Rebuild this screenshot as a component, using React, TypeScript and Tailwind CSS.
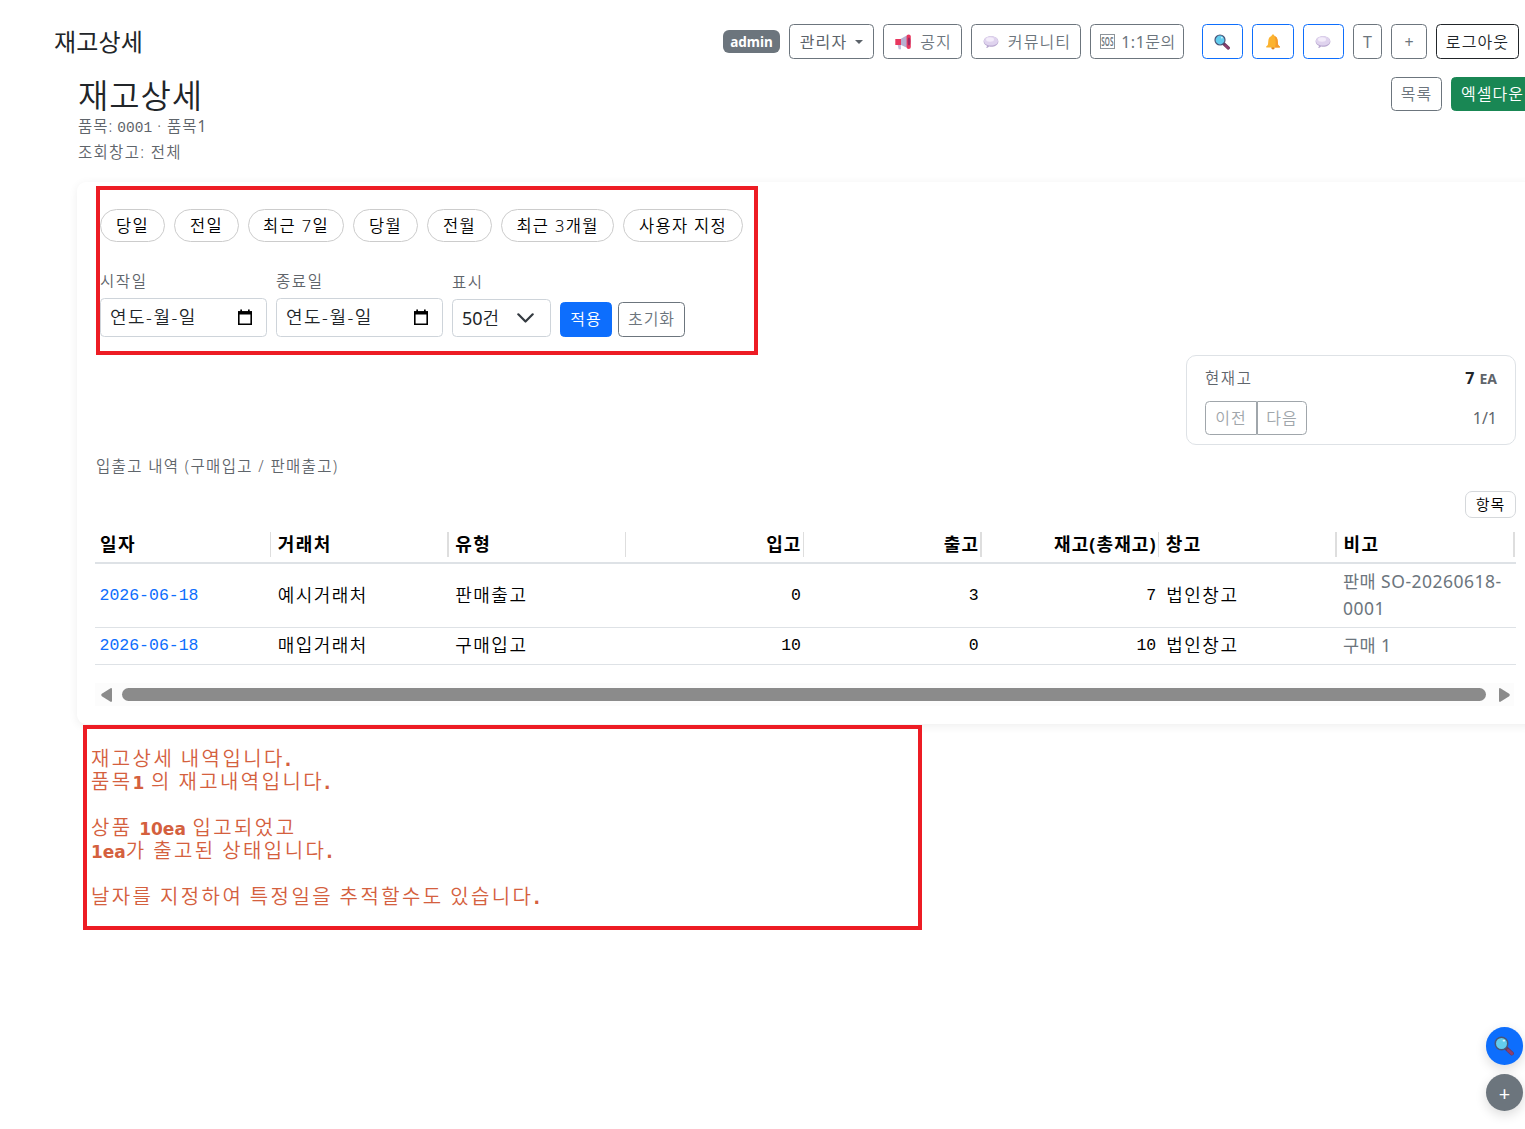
import type { ReactNode } from 'react'
import clsx from 'clsx'

const PRESETS = [
  { label: '당일', width: 'w-[65px]' },
  { label: '전일', width: 'w-[65px]' },
  { label: '최근 7일', width: 'w-[96px]' },
  { label: '당월', width: 'w-[65px]' },
  { label: '전월', width: 'w-[65px]' },
  { label: '최근 3개월', width: 'w-[113px]' },
  { label: '사용자 지정', width: 'w-[120px]' },
]

const COLUMNS = [
  { label: '일자', bar: 'w-px' },
  { label: '거래처', bar: 'w-[2px]' },
  { label: '유형', bar: 'w-px' },
  { label: '입고', bar: 'w-px', right: true },
  { label: '출고', bar: 'w-[2px]', right: true },
  { label: '재고(총재고)', bar: 'w-px', right: true },
  { label: '창고', bar: 'w-[2px]' },
  { label: '비고', bar: 'w-[2px]' },
]

const ROWS = [
  { date: '2026-06-18', partner: '예시거래처', type: '판매출고', inQty: 0, outQty: 3, stock: 7, warehouse: '법인창고', memo: ['판매 SO-20260618-', '0001'] },
  { date: '2026-06-18', partner: '매입거래처', type: '구매입고', inQty: 10, outQty: 0, stock: 10, warehouse: '법인창고', memo: ['구매 1'] },
]

function SearchIcon({ className }: { className?: string }) {
  return (
    <svg viewBox="0 0 16 16" className={className}>
      <path d="M10 10l4.3 4" stroke="#6b3a5e" strokeWidth="3.2" strokeLinecap="round" />
      <path d="M11.4 11.4l2.8 2.6" stroke="#8e3f6e" strokeWidth="2.2" strokeLinecap="round" />
      <circle cx="6" cy="6" r="5" fill="#63cdee" stroke="#4a5578" strokeWidth="1.2" />
      <ellipse cx="7.9" cy="3.7" rx="1" ry=".7" fill="#d9f5ff" />
    </svg>
  )
}

function BellIcon() {
  return (
    <svg viewBox="0 0 16 16" className="size-4">
      <circle cx="8" cy="13.8" r="1.7" fill="#d98324" />
      <path d="M8 .6c.9 0 1.4.6 1.4 1.4 2.3.7 3.1 2.6 3.3 5l.3 3.2c.2 1 .9 1.5 1.8 2.4.3.4.2 1-.4 1H1.6c-.6 0-.7-.6-.4-1 .9-.9 1.6-1.4 1.8-2.4l.3-3.2c.2-2.4 1-4.3 3.3-5C6.6 1.2 7.1.6 8 .6z" fill="#fcb32f" />
      <path d="M9.4 2c2.3.7 3.1 2.6 3.3 5l.3 3.2c.2 1 .9 1.5 1.8 2.4.3.4.2 1-.4 1H10c1-3 1-8-.6-11.6z" fill="#f59a2c" />
    </svg>
  )
}

function BubbleIcon() {
  return (
    <svg viewBox="0 0 16 16" className="size-4">
      <path d="M8 2.2c4.2 0 7.4 2.3 7.4 5.3S12.2 12.8 8 12.8c-.7 0-1.3 0-1.9-.2-.6.9-1.7 1.5-3 1.5.6-.6.9-1.4.8-2.3C1.9 10.9.6 9.3.6 7.5.6 4.5 3.8 2.2 8 2.2z" fill="#b9a8d0" />
      <path d="M8 2.2c4.1 0 7 2 7 4.7s-3 4.6-7 4.6-7-1.9-7-4.6 2.9-4.7 7-4.7z" fill="#dfd3ee" />
      <ellipse cx="7" cy="5.5" rx="4" ry="2.2" fill="#f3ecfa" />
    </svg>
  )
}

function MegaphoneIcon() {
  return (
    <svg viewBox="0 0 16 16" className="size-4">
      <path d="M2.6 10.5h3.2l.2 4.7H3.7z" fill="#c3b8d8" />
      <path d="M5.5 5L13 .8v13.5L5.5 10.7z" fill="#b7afd0" />
      <path d="M.3 5H6v6H.3z" fill="#e8375f" />
      <rect x="11.6" y=".4" width="4.2" height="14.6" rx="2.1" fill="#e8375f" />
      <ellipse cx="14" cy="7.6" rx="1.3" ry="4" fill="#9c2a63" />
    </svg>
  )
}

function SosIcon() {
  return (
    <span className="flex h-[15px] w-[15px] items-center justify-center border border-[#8d949a]">
      <span className="scale-x-[.58] scale-y-110 text-[11px] leading-none font-semibold tracking-normal text-[#6c757d]">SOS</span>
    </span>
  )
}

function CalendarIcon() {
  return (
    <svg viewBox="0 0 16 17" className="h-[17px] w-4" fill="none">
      <path d="M1.8 3h12.4v12.2H1.8z" stroke="#000" strokeWidth="1.6" />
      <path d="M1 2.2h14v3.3H1zM3.3.5H5v2H3.3zM11 .5h1.7v2H11z" fill="#000" />
    </svg>
  )
}

function Button({ height = 'h-[35px]', className, children }: { height?: string; className?: string; children: ReactNode }) {
  return (
    <button className={clsx('flex shrink-0 items-center justify-center rounded-[4.5px] border text-[16px] leading-none whitespace-nowrap', height, className)}>
      {children}
    </button>
  )
}

function DateField({ label }: { label: string }) {
  return (
    <div className="w-[167px]">
      <div className="h-[27px] text-[15.5px] leading-[20px] tracking-[1.6px] text-[#5f656b]">{label}</div>
      <div className="flex h-[39px] items-center justify-between rounded-[4.5px] border border-[#ced4da] pr-[13px] pl-[9px] text-[18px] tracking-[1.5px] text-[#212529]">
        <span>연도-월-일</span>
        <CalendarIcon />
      </div>
    </div>
  )
}

function Latin({ children }: { children: ReactNode }) {
  return <span className="font-['DejaVu_Sans'] text-[17px] leading-none font-bold tracking-normal">{children}</span>
}

function Header() {
  return (
    <header className="flex h-[59px] items-end justify-between pr-[6px] pl-[54px]">
      <div className="flex h-[35px] items-center text-[24px] leading-none font-normal tracking-[.2px] text-[#212529]">재고상세</div>
      <div className="flex items-center gap-[9px] tracking-[1.1px]">
        <span className="flex h-[23px] w-[57px] items-center justify-center rounded-[6px] bg-[#6c757d] pt-px text-[13.5px] font-bold tracking-normal text-white">admin</span>
        <Button className="w-[85px] gap-[8px] border-[#6c757d] font-normal text-[#5c636a]">
          관리자
          <span className="border-x-[4px] border-t-[4px] border-x-transparent border-t-[#5c636a]" />
        </Button>
        <Button className="w-[79px] gap-[9px] border-[#6c757d] pl-[2px] text-[#6c757d]"><MegaphoneIcon />공지</Button>
        <Button className="w-[110px] gap-[9px] border-[#6c757d] pl-[2px] text-[#6c757d]"><BubbleIcon />커뮤니티</Button>
        <Button className="mr-[9px] w-[94px] gap-[6px] border-[#6c757d] pl-[2px] tracking-[.5px] text-[#6c757d]"><SosIcon /><span><span className="font-normal">1:1</span>문의</span></Button>
        <Button className="w-[41px] border-[#0d6efd] pr-px"><SearchIcon className="size-4" /></Button>
        <Button className="w-[42px] border-[#0d6efd]"><BellIcon /></Button>
        <Button className="w-[41px] border-[#0d6efd] pr-px"><BubbleIcon /></Button>
        <Button className="w-[29px] border-[#6c757d] font-normal tracking-normal text-[#6c757d]">T</Button>
        <Button className="w-[36px] border-[#6c757d] pt-px font-normal tracking-normal text-[#6c757d]">+</Button>
        <Button className="w-[83px] border-[#212529] text-[#212529]">로그아웃</Button>
      </div>
    </header>
  )
}

function StockTable() {
  return (
    <table className="w-[1421px] table-fixed border-collapse text-[18px] text-black">
      <thead>
        <tr className="h-[37px] border-b-2 border-[#dee2e6]">
          {COLUMNS.map(c => (
            <th key={c.label} className={clsx('relative pt-px pb-0 font-bold whitespace-nowrap', c.right ? 'pr-[4px] text-right tracking-[1.1px]' : 'pl-[5px] text-left tracking-[1.5px]')}>
              {c.label}
              <span className={clsx('absolute top-[6px] right-[1.5px] h-[25px] bg-[#dedede]', c.bar)} />
            </th>
          ))}
        </tr>
      </thead>
      <tbody>
        {ROWS.map(r => (
          <tr key={r.partner} className={clsx('border-b border-[#dee2e6] tracking-[1.5px]', r.memo.length > 1 ? 'h-[64px]' : 'h-[37px]')}>
            <td className="px-[4.5px] pt-[2px] font-['Liberation_Mono'] text-[16.5px] tracking-normal text-[#0d6efd]">{r.date}</td>
            <td className="px-[5px]">{r.partner}</td>
            <td className="px-[5px]">{r.type}</td>
            {[r.inQty, r.outQty, r.stock].map((n, i) => (
              <td key={i} className="px-[4.5px] pt-[2px] text-right font-['Liberation_Mono'] text-[16.5px] tracking-normal">{n}</td>
            ))}
            <td className="px-[5.5px]">{r.warehouse}</td>
            <td className="pl-[4.5px] text-[17.5px] leading-[27.5px] font-normal tracking-[.5px] whitespace-nowrap text-[#6c757d]">
              {r.memo.map(m => <div key={m} className="h-[27.5px]">{m}</div>)}
            </td>
          </tr>
        ))}
      </tbody>
    </table>
  )
}

export default function App() {
  return (
    <div className="relative h-[1129px] w-[1525px] overflow-hidden bg-white font-['Noto_Sans','Noto_Sans_CJK_KR',sans-serif] font-[350]">
      <Header />

      <div className="mt-[18px] flex h-[105px] items-start justify-between pl-[78px]">
        <div>
          <h1 className="h-[36px] text-[33px] leading-[37px] font-[350] tracking-[.9px] text-[#212529]">재고상세</h1>
          <div className="text-[15.5px] leading-[26px] tracking-[1px] text-[#5f656b]">
            <div className="h-[26px]">품목: <span className="-ml-px font-['Liberation_Mono'] text-[14.5px] tracking-normal">0001</span> · 품목<span className="font-normal">1</span></div>
            <div className="h-[26px] tracking-[1.3px]">조회창고: 전체</div>
          </div>
        </div>
        <div className="-mr-[9px] flex gap-[9px] tracking-[1px]">
          <Button height="h-[34px]" className="w-[51px] border-[#6c757d] pb-px text-[#6c757d]">목록</Button>
          <Button height="h-[34px]" className="w-[83px] border-[#198754] bg-[#198754] pb-px text-white">엑셀다운</Button>
        </div>
      </div>

      <main className="ml-[77px] h-[542px] w-[1460px] rounded-[9px] bg-white pl-[18px] shadow-[0_2px_10px_rgba(0,0,0,.07)]">
        <div className="flex gap-[9px] pt-[27px] pl-[5px]">
          {PRESETS.map(p => (
            <button key={p.label} className={clsx('flex h-[33px] items-center justify-center rounded-full border border-[#ccc] pt-px text-[16.5px] tracking-[1.3px] whitespace-nowrap text-black', p.width)}>
              {p.label}
            </button>
          ))}
        </div>

        <div className="mt-[29px] flex h-[66px] items-end gap-[9px] pl-[5px]">
          <DateField label="시작일" />
          <DateField label="종료일" />
          <div className="w-[99px]">
            <div className="h-[27px] text-[15.5px] leading-[20px] tracking-[1.6px] text-[#5f656b]">표시</div>
            <div className="flex h-[38px] items-center justify-between rounded-[4.5px] border border-[#ced4da] pr-[16px] pl-[9px] text-[18px] text-[#212529]">
              <span><span className="font-normal">50</span>건</span>
              <svg viewBox="0 0 17 10" className="h-[10px] w-[17px]" fill="none" stroke="#343a40" strokeWidth="2.2" strokeLinecap="round" strokeLinejoin="round">
                <path d="M1.3 1.3l7.2 7.2 7.2-7.2" />
              </svg>
            </div>
          </div>
          <div className="flex gap-[6px] tracking-[1px]">
            <Button className="w-[52px] border-[#0d6efd] bg-[#0d6efd] pb-[2px] text-white">적용</Button>
            <Button className="w-[67px] border-[#6c757d] pb-[2px] text-[#6c757d]">초기화</Button>
          </div>
        </div>

        <section className="mt-[18px] ml-[1091px] h-[90px] w-[330px] rounded-[10px] border border-[#dee2e6] px-[18px] pt-[9px]">
          <div className="flex h-[27px] items-center justify-between text-[15.5px] tracking-[1.6px] text-[#5f656b]">
            <span>현재고</span>
            <span className="flex items-baseline gap-[5px] pb-[2px] tracking-normal">
              <b className="text-[16px] leading-none text-[#212529]">7</b>
              <b className="text-[14px] leading-none">EA</b>
            </span>
          </div>
          <div className="mt-[9px] flex h-[34px] items-center justify-between">
            <div className="flex tracking-[1px]">
              <Button height="h-[34px]" className="w-[52px] rounded-r-none border-[#a0a6ab] text-[#a0a6ab]">이전</Button>
              <Button height="h-[34px]" className="w-[50px] rounded-l-none border-[#a0a6ab] text-[#a0a6ab]">다음</Button>
            </div>
            <span className="text-[16px] font-normal text-[#5f656b]">1/1</span>
          </div>
        </section>

        <div className="mt-[8px] h-[26px] pl-px text-[15.5px] leading-[26px] tracking-[1.35px] text-[#5f656b]">입출고 내역 (구매입고 / 판매출고)</div>
        <div className="mt-[12px] flex h-[35px] w-[1421px] justify-end">
          <button className="flex h-[27px] w-[51px] items-center justify-center rounded-[7px] border border-[#d5d8db] text-[15px] tracking-[1px] text-black">항목</button>
        </div>

        <StockTable />

        <div className="mt-[18px] flex h-[23px] w-[1419px] items-center bg-[#fcfcfc] pl-[6px]">
          <svg viewBox="0 0 11 14" className="mt-px h-[14px] w-[11px] shrink-0" fill="#8b8b8b"><path d="M11 1.2v11.6q0 1.4-1.4 1L.8 8.2Q-.3 7 .8 5.8L9.6.2Q11-.2 11 1.2z" /></svg>
          <div className="ml-[10px] h-[13px] w-[1364px] rounded-full bg-[#8b8b8b]" />
          <svg viewBox="0 0 11 14" className="mt-px ml-[13px] h-[14px] w-[11px] shrink-0" fill="#8b8b8b"><path d="M0 1.2v11.6q0 1.4 1.4 1l8.800-5.6q1.1-1.2 0-2.4L1.4.2Q0-.2 0 1.2z" /></svg>
        </div>
      </main>

      {/* guide note under the card */}
      <div className="relative mt-px ml-[83px] h-[205px] w-[839px] border-4 border-[#ed1c24] bg-white pt-[18px] pl-[4px] text-[20px] leading-[23px] tracking-[2.4px] whitespace-nowrap text-[#d4603e] [word-spacing:-1px]">
        <div className="h-[23px]">재고상세 내역입니다<Latin>.</Latin></div>
        <div className="h-[23px]">품목<Latin>1</Latin> 의 재고내역입니다<Latin>.</Latin></div>
        <div className="mt-[23px] h-[23px]">상품 <Latin>10ea</Latin> 입고되었고</div>
        <div className="h-[23px]"><Latin>1ea</Latin>가 출고된 상태입니다<Latin>.</Latin></div>
        <div className="mt-[23px] h-[23px]">날자를 지정하여 특정일을 추적할수도 있습니다<Latin>.</Latin></div>
      </div>

      {/* highlight frame over the filter area */}
      <div className="absolute top-[186px] left-[96px] h-[169px] w-[662px] border-4 border-[#ed1c24]" />

      <div className="absolute right-[2px] bottom-[18px] flex flex-col gap-[9px]">
        <button className="flex h-[38px] w-[37px] items-center justify-center rounded-full bg-[#0d6efd] pr-[2px] shadow-[0_4px_12px_rgba(0,0,0,.14)]"><SearchIcon className="size-5" /></button>
        <button className="flex size-[37px] items-center justify-center rounded-full bg-[#6c757d] pt-[2px] text-[20px] leading-none font-normal text-white shadow-[0_4px_12px_rgba(0,0,0,.14)]">+</button>
      </div>
    </div>
  )
}
